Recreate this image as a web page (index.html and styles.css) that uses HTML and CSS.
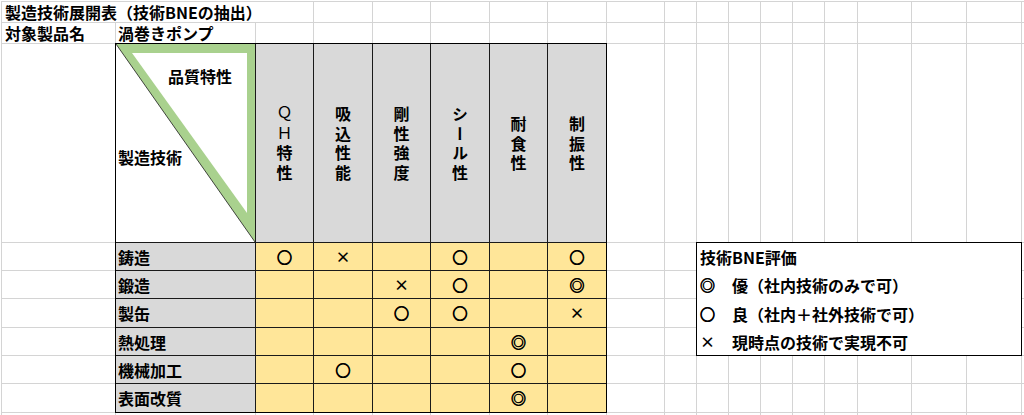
FILE: index.html
```html
<!DOCTYPE html>
<html lang="ja">
<head>
<meta charset="utf-8">
<title>製造技術展開表（技術BNEの抽出）</title>
<link rel="stylesheet" href="styles.css">
</head>
<body>
<div class="sheet">
  <div class="bne">
    <div class="corner">
      <svg class="tri" viewBox="0 0 139 198" width="139" height="198">
        <polygon points="0,0 139,0 139,198" fill="#a9d18e"/>
        <polygon points="16,9 131,9 131,169" fill="#fff"/>
        <line x1="0" y1="0" x2="139" y2="198" stroke="#1a1a1a" stroke-width="0.8"/>
      </svg>
      <div class="corner-labels">
        <span class="lbl-q">品質特性</span>
        <span class="lbl-m">製造技術</span>
      </div>
    </div>
    <div class="hd"><span class="vt"><span class="lat">ＱＨ</span>特性</span></div>
    <div class="hd"><span class="vt">吸込性能</span></div>
    <div class="hd"><span class="vt">剛性強度</span></div>
    <div class="hd"><span class="vt">シール性</span></div>
    <div class="hd"><span class="vt">耐食性</span></div>
    <div class="hd"><span class="vt">制振性</span></div>

    <div class="lab">鋳造</div>
    <div class="y o">○</div><div class="y">×</div><div class="y"></div><div class="y o">○</div><div class="y"></div><div class="y o">○</div>

    <div class="lab">鍛造</div>
    <div class="y"></div><div class="y"></div><div class="y">×</div><div class="y o">○</div><div class="y"></div><div class="y oo">◎</div>

    <div class="lab">製缶</div>
    <div class="y"></div><div class="y"></div><div class="y o">○</div><div class="y o">○</div><div class="y"></div><div class="y">×</div>

    <div class="lab">熱処理</div>
    <div class="y"></div><div class="y"></div><div class="y"></div><div class="y"></div><div class="y oo">◎</div><div class="y"></div>

    <div class="lab">機械加工</div>
    <div class="y"></div><div class="y o">○</div><div class="y"></div><div class="y"></div><div class="y o">○</div><div class="y"></div>

    <div class="lab">表面改質</div>
    <div class="y"></div><div class="y"></div><div class="y"></div><div class="y"></div><div class="y oo">◎</div><div class="y"></div>
  </div>

  <div class="legend">
    <div class="lg-title">技術BNE評価</div>
    <div class="lg-sym oo">◎</div><div class="lg-txt">優（社内技術のみで可）</div>
    <div class="lg-sym o">○</div><div class="lg-txt">良（社内＋社外技術で可）</div>
    <div class="lg-sym">×</div><div class="lg-txt">現時点の技術で実現不可</div>
  </div>

  <!-- row 1 -->
  <div class="c title">製造技術展開表（技術BNEの抽出）</div>
  <i></i><i></i><i></i><i></i><i></i><i></i><i></i><i></i><i></i><i></i><i></i><i></i><i></i><i></i><i></i><i></i>
  <!-- row 2 -->
  <div class="c">対象製品名</div>
  <div class="c pl2">渦巻きポンプ</div>
  <i></i><i></i><i></i><i></i><i></i><i></i><i></i><i></i><i></i><i></i><i></i><i></i><i></i><i></i><i></i><i></i><i></i>
  <!-- row 3 -->
  <i></i><i></i><i></i><i></i><i></i><i></i><i></i><i></i><i></i><i></i><i></i><i></i>
  <!-- rows 4-7 -->
  <i></i><i></i><i></i><i></i>
  <i></i><i></i><i></i><i></i>
  <i></i><i></i><i></i><i></i>
  <i></i><i></i><i></i><i></i>
  <!-- rows 8-9 -->
  <i></i><i></i><i></i><i></i><i></i><i></i><i></i><i></i><i></i><i></i><i></i><i></i>
  <i></i><i></i><i></i><i></i><i></i><i></i><i></i><i></i><i></i><i></i><i></i><i></i>
  <!-- row 10 -->
  <i></i><i></i><i></i><i></i><i></i><i></i><i></i><i></i><i></i><i></i><i></i><i></i><i></i><i></i><i></i><i></i><i></i><i></i><i></i>
</div>
</body>
</html>
```

FILE: styles.css
```css
html, body {
  margin: 0;
  padding: 0;
  overflow: hidden;
  background: #fff;
}

body {
  font-family: "Noto Sans CJK JP", "Noto Sans", sans-serif;
  font-size: 16px;
  font-weight: 700;
  line-height: 20px;
  color: #000;
}

.sheet {
  display: grid;
  grid-template-columns:
    113px 139px 57px 58px 57px 58px 57px 58px 57px
    31px 31px 31px 31px 31px 32px 53px 54px 54px 2px;
  grid-template-rows: 20px 20px 198px 27px 27px 28px 27px 27px 28px 2px;
  gap: 1px;
  background: #d4d4d4;
  margin: 1px 0 0 1px;
  padding: 1px 0 0 1px;
}

.sheet > i {
  display: block;
  background: #fff;
}

.c {
  background: #fff;
  display: flex;
  align-items: center;
  padding-left: 3px;
  white-space: nowrap;
}

.c.pl2 {
  padding-left: 2px;
}

.title {
  grid-column: span 3;
}

/* main matrix */
.bne {
  grid-column: 2 / 9;
  grid-row: 3 / 10;
  display: grid;
  grid-template-columns: 139px 57px 58px 57px 58px 57px 58px;
  grid-template-rows: 198px 27px 27px 28px 27px 27px 28px;
  gap: 1px;
  background: #1a1a1a;
  outline: 1px solid #000;
}

.corner {
  display: grid;
  background: #fff;
}

.tri,
.corner-labels {
  grid-area: 1 / 1;
}

.tri {
  display: block;
}

.corner-labels {
  display: flex;
  flex-direction: column;
  align-items: flex-start;
  padding-top: 22px;
  white-space: nowrap;
}

.lbl-q {
  margin-left: 52px;
}

.lbl-m {
  margin-top: 61px;
  margin-left: 2px;
}

.hd {
  background: #d9d9d9;
  display: flex;
  align-items: center;
  justify-content: center;
}

.vt {
  writing-mode: vertical-rl;
  text-orientation: upright;
  letter-spacing: 3.5px;
  margin-top: 4px;
}

.lat {
  font-weight: 400;
}

.lab {
  background: #d9d9d9;
  display: flex;
  align-items: center;
  padding-left: 2px;
  white-space: nowrap;
}

.y {
  background: #ffe699;
  display: flex;
  align-items: center;
  justify-content: center;
  font-size: 15px;
}

.o {
  -webkit-text-stroke: 0.9px #000;
}

.oo {
  -webkit-text-stroke: 0.6px #000;
}

/* legend */
.legend {
  grid-column: 11 / 19;
  grid-row: 4 / 8;
  display: grid;
  grid-template-columns: 32px 1fr;
  grid-template-rows: 28px 28px 29px 27px;
  background: #fff;
  outline: 1px solid #000;
}

.legend > div {
  display: flex;
  align-items: center;
  white-space: nowrap;
}

.lg-title {
  grid-column: 1 / 3;
  padding-left: 3px;
}

.lg-sym {
  padding-left: 3px;
  font-size: 15px;
}

.lg-txt {
  padding-left: 3px;
}
```
